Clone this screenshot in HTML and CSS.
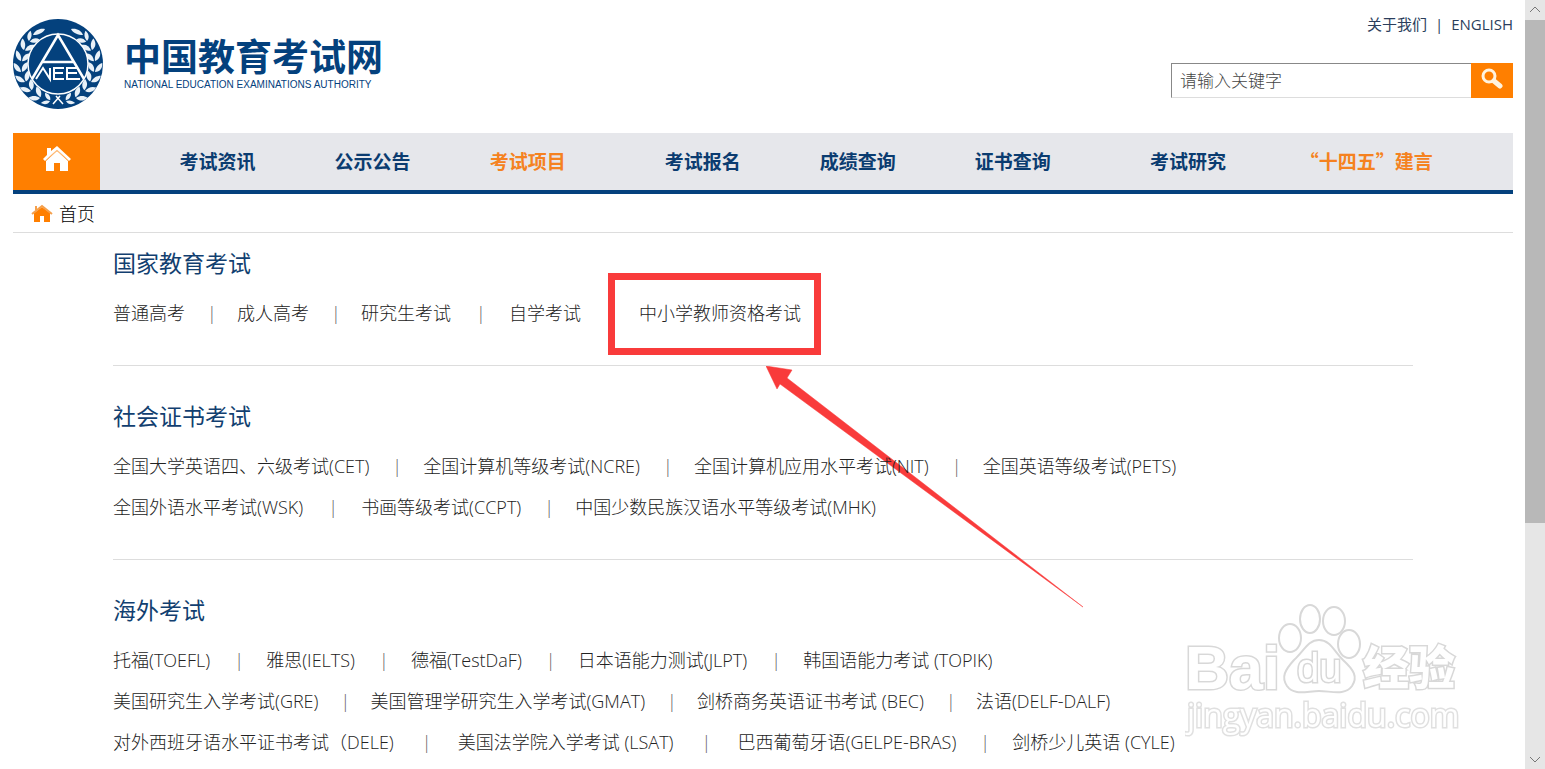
FILE: index.html
```html
<!DOCTYPE html>
<html lang="zh-CN">
  <head>
    <meta charset="UTF-8" />
    <meta name="viewport" content="width=device-width, initial-scale=1.0" />
    <title>中国教育考试网</title>
    <link rel="stylesheet" href="styles.css">
  </head>
  <body>
    <div class="page">
      <header class="header">
        <a class="brand" href="#">
          <svg class="emblem" viewBox="0 0 90 90" aria-hidden="true">
            <defs>
              <g id="leaf">
                <path d="M0 0C-5-1-7-5-6-10C-2-8 0-5 0 0Z" />
                <path d="M1 0C1-5 3-8 8-9C8-4 6-1 1 0Z" />
              </g>
              <g id="laurel">
                <use href="#leaf" transform="translate(37 82) rotate(-72) scale(.8)" />
                <use href="#leaf" transform="translate(27 79) rotate(-58)" />
                <use href="#leaf" transform="translate(18 72) rotate(-42)" />
                <use href="#leaf" transform="translate(12 63) rotate(-26)" />
                <use href="#leaf" transform="translate(8 53) rotate(-8)" />
                <use href="#leaf" transform="translate(8 42) rotate(8)" />
                <use href="#leaf" transform="translate(11 31) rotate(24)" />
                <use href="#leaf" transform="translate(16 22) rotate(40) scale(.9)" />
                <path d="M20 16C22 11 27 9 32 10C30 14 25 16 20 16Z" />
              </g>
            </defs>
            <circle cx="45" cy="45" r="45" fill="#04417d" />
            <g fill="#e9f1f8">
              <use href="#laurel" />
              <use href="#laurel" transform="translate(90 0) scale(-1 1)" />
            </g>
            <circle cx="45" cy="45" r="30" fill="#04417d" stroke="#fff" stroke-width="1.5" />
            <g fill="none" stroke="#fff" stroke-width="2.5">
              <path d="M19 60L45 16L71 60M29 43H61" />
              <path d="M23 60L30 49L37 60V49M51 49H41V60H51M41 54H50M65 49H54V60H67M54 54H64" stroke-width="2" />
              <path d="M40 85L47 77M50 85L43 77" stroke-width="1.5" />
            </g>
          </svg>
          <span class="brand-text">
            <strong>中国教育考试网</strong>
            <small>NATIONAL EDUCATION EXAMINATIONS AUTHORITY</small>
          </span>
        </a>
        <div class="tools">
          <div class="top-links"><a href="#">关于我们</a><span>|</span><a href="#">ENGLISH</a></div>
          <form class="search">
            <input type="text" placeholder="请输入关键字" aria-label="请输入关键字" />
            <button type="button" aria-label="搜索">
              <svg viewBox="0 0 22 22" width="22" height="22" aria-hidden="true">
                <circle cx="8" cy="8" r="6" fill="none" stroke="#fff3df" stroke-width="3" />
                <path d="M13 13L19 18" stroke="#fff3df" stroke-width="5" stroke-linecap="round" />
              </svg>
            </button>
          </form>
        </div>
      </header>

      <nav class="nav">
        <a class="home" href="#" aria-label="首页">
          <svg viewBox="0 0 28 26" width="28" height="26" aria-hidden="true">
            <path d="M0 13L4 9V2H8V5L14 0L28 13L26 15L14 4L2 15Z" fill="#fff" />
            <path d="M3 15L14 5L25 15V25H17V17H11V25H3Z" fill="#fff" />
            <path d="M2 15L14 4L26 15" fill="none" stroke="#ffc68c" stroke-width="1" />
          </svg>
        </a>
        <ul class="menu">
          <li><a href="#">考试资讯</a></li>
          <li><a href="#">公示公告</a></li>
          <li><a class="active" href="#">考试项目</a></li>
          <li class="group"><a href="#">考试报名</a></li>
          <li><a href="#">成绩查询</a></li>
          <li><a href="#">证书查询</a></li>
          <li class="group"><a href="#">考试研究</a></li>
          <li class="last"><a class="active" href="#">“十四五”建言</a></li>
        </ul>
      </nav>

      <div class="crumb">
        <svg viewBox="0 0 22 18" width="22" height="18" aria-hidden="true">
          <path d="M3 9L11 3L19 9V18H13V12H9V18H3Z" fill="#ff7f00" />
          <path d="M1 10L11 2L21 10M5 2V6" fill="none" stroke="#f5a04c" stroke-width="2" />
        </svg>
        <a href="#">首页</a>
      </div>

      <main class="content">
        <section>
          <h2>国家教育考试</h2>
          <ul class="exams tight">
            <li><a href="#">普通高考</a></li>
            <li><span>|</span><a href="#">成人高考</a></li>
            <li><span>|</span><a href="#">研究生考试</a></li>
            <li class="wide"><span>|</span><a href="#">自学考试</a></li>
            <li class="blank">
              <a class="marked" href="#">中小学教师资格考试</a>
              <svg class="arrow" viewBox="0 0 320 242" width="320" height="242" aria-hidden="true">
                <path d="M0 0L26 4L21 12L317 241L14 18L11 23Z" fill="#f93b3b" stroke="#f93b3b" stroke-width=".5" />
              </svg>
            </li>
          </ul>
        </section>

        <section>
          <h2>社会证书考试</h2>
          <ul class="exams">
            <li><a href="#">全国大学英语四、六级考试(CET)</a></li>
            <li><span>|</span><a href="#">全国计算机等级考试(NCRE)</a></li>
            <li><span>|</span><a href="#">全国计算机应用水平考试(NIT)</a></li>
            <li><span>|</span><a href="#">全国英语等级考试(PETS)</a></li>
          </ul>
          <ul class="exams">
            <li><a href="#">全国外语水平考试(WSK)</a></li>
            <li class="wide"><span>|</span><a href="#">书画等级考试(CCPT)</a></li>
            <li><span>|</span><a href="#">中国少数民族汉语水平等级考试(MHK)</a></li>
          </ul>
        </section>

        <section>
          <h2>海外考试</h2>
          <ul class="exams loose">
            <li><a href="#">托福(TOEFL)</a></li>
            <li><span>|</span><a href="#">雅思(IELTS)</a></li>
            <li><span>|</span><a href="#">德福(TestDaF)</a></li>
            <li><span>|</span><a href="#">日本语能力测试(JLPT)</a></li>
            <li><span>|</span><a href="#">韩国语能力考试 (TOPIK)</a></li>
          </ul>
          <ul class="exams tight">
            <li><a href="#">美国研究生入学考试(GRE)</a></li>
            <li><span>|</span><a href="#">美国管理学研究生入学考试(GMAT)</a></li>
            <li><span>|</span><a href="#">剑桥商务英语证书考试 (BEC)</a></li>
            <li><span>|</span><a href="#">法语(DELF-DALF)</a></li>
          </ul>
          <ul class="exams loose">
            <li><a href="#">对外西班牙语水平证书考试（DELE)</a></li>
            <li class="wide"><span>|</span><a href="#">美国法学院入学考试 (LSAT)</a></li>
            <li class="wide"><span>|</span><a href="#">巴西葡萄牙语(GELPE-BRAS)</a></li>
            <li><span>|</span><a href="#">剑桥少儿英语 (CYLE)</a></li>
          </ul>
        </section>
      </main>
    </div>

    <svg class="watermark" viewBox="0 0 290 140" width="290" height="140" aria-hidden="true">
      <g fill="#fff" stroke="#d8d8d8" stroke-width="2">
        <ellipse cx="105" cy="34" rx="11" ry="14" />
        <ellipse cx="125" cy="15" rx="10" ry="14" />
        <ellipse cx="149" cy="17" rx="11" ry="14" />
        <ellipse cx="164" cy="40" rx="11" ry="14" />
        <path d="M134 36C145 36 149 47 158 56C169 66 173 73 167 82C160 92 146 87 134 87C122 87 109 92 102 82C96 73 100 66 109 56C119 47 123 36 134 36Z" />
      </g>
      <g class="watermark-text">
        <text class="latin" x="0" y="85">Bai</text>
        <text class="du" x="112" y="78">du</text>
        <text class="cjk" x="178" y="80">经验</text>
        <text class="domain" x="2" y="123">jingyan.baidu.com</text>
      </g>
    </svg>

    <div class="scrollbar" aria-hidden="true">
      <svg viewBox="0 0 20 20"><path d="M5 12L10 7L15 12" /></svg>
      <div class="track"><div class="thumb"></div></div>
      <svg viewBox="0 0 20 20"><path d="M5 8L10 13L15 8" /></svg>
    </div>
  </body>
</html>
```
FILE: styles.css
```css
* {
  box-sizing: border-box;
}
body {
  margin: 0;
  height: 100vh;
  overflow: hidden;
  background: #fff;
  color: #222;
  font-family: "Open Sans", "Noto Sans CJK SC", sans-serif;
  font-size: 18px;
  font-weight: 300;
}
a {
  color: inherit;
  text-decoration: none;
}
ul {
  margin: 0;
  padding: 0;
  list-style: none;
}
.page {
  margin: 0 32px 0 13px;
}

/* header */
.header {
  display: flex;
  justify-content: space-between;
  height: 133px;
}
.brand {
  display: flex;
  align-items: flex-start;
  gap: 21px;
  padding-top: 19px;
  color: #04417d;
}
.emblem {
  width: 90px;
  height: 90px;
}
.brand-text {
  display: flex;
  flex-direction: column;
  padding-top: 16px;
}
.brand-text strong {
  font-family: "Noto Sans CJK SC", sans-serif;
  font-size: 37px;
  font-weight: bold;
  line-height: 40px;
}
.brand-text small {
  font-family: "Liberation Sans", sans-serif;
  font-size: 10px;
  font-weight: normal;
  line-height: 20px;
}
.tools {
  padding-top: 13px;
}
.top-links {
  display: flex;
  justify-content: flex-end;
  gap: 8px;
  color: #2b3e5c;
  font-size: 15px;
  font-weight: normal;
  line-height: 22px;
}
.search {
  display: flex;
  width: 342px;
  height: 35px;
  margin-top: 28px;
}
.search input {
  flex: 1;
  min-width: 0;
  padding: 0 8px;
  border: 1px solid #ddd;
  border-top-color: #888;
  border-left-color: #888;
  border-right: 0;
  font: inherit;
  font-size: 17px;
  outline: none;
}
.search input::placeholder {
  color: #444;
}
.search button {
  width: 42px;
  padding: 0;
  border: 0;
  background: #ff7f00;
  cursor: pointer;
}

/* navigation */
.nav {
  display: flex;
  height: 61px;
  border-bottom: 4px solid #04417d;
  background: #e6e7eb;
}
.home {
  display: flex;
  justify-content: center;
  width: 87px;
  padding-top: 13px;
  background: #ff7f00;
}
.menu {
  display: flex;
  flex: 1;
  padding: 0 46px 0 40px;
}
.menu li {
  flex: 1;
  color: #0b3c70;
  font-family: "Noto Sans CJK SC", sans-serif;
  font-size: 19px;
  font-weight: bold;
  line-height: 55px;
  text-align: center;
  white-space: nowrap;
}
.menu .group {
  margin-left: 20px;
}
.menu .last {
  flex: 1.3;
}
.menu .active {
  color: #f58220;
}

.crumb {
  display: flex;
  align-items: center;
  gap: 6px;
  height: 39px;
  padding-left: 18px;
  border-bottom: 1px solid #ddd;
  color: #000;
}

/* exam lists */
.content {
  padding: 0 100px;
}
section {
  padding: 20px 0 31px;
  border-bottom: 1px solid #ddd;
}
section:first-child {
  padding-top: 0;
}
section:last-child {
  border-bottom: 0;
}
h2 {
  margin: 0;
  color: #123f70;
  font-size: 23px;
  font-weight: normal;
  line-height: 60px;
}
.exams {
  display: flex;
  line-height: 41px;
  white-space: nowrap;
}
.exams li {
  position: relative;
  display: flex;
}
.exams span {
  width: 8px;
  margin: 0 23px;
  color: #666;
  text-align: center;
}
.tight span {
  margin: 0 22px;
}
.loose span {
  margin: 0 24px;
}
.exams .wide span {
  margin: 0 25px;
}
.loose .wide span {
  margin: 0 28px;
}
.exams .blank {
  margin-left: 58px;
}

/* red frame and arrow */
.marked::after {
  content: "";
  position: absolute;
  inset: -20px -20px -21px -31px;
  border: 7px solid #f93b3b;
}
.arrow {
  position: absolute;
  top: 73px;
  left: 127px;
}

.watermark {
  position: fixed;
  right: 70px;
  bottom: 25px;
}
.watermark-text {
  fill: #fff;
  stroke: #d8d8d8;
  stroke-width: 3px;
  paint-order: stroke;
}
.latin {
  font: bold 61px "Liberation Sans", sans-serif;
}
.du {
  font: 40px "Liberation Sans", sans-serif;
}
.cjk {
  font: 900 46px "Noto Sans CJK SC", sans-serif;
}
.domain {
  font: 32px "Open Sans", sans-serif;
  stroke: #e0e0e0;
}

.scrollbar {
  position: fixed;
  top: 0;
  right: 0;
  bottom: 0;
  display: flex;
  flex-direction: column;
  width: 20px;
  background: #e6e6e6;
}
.scrollbar svg {
  height: 20px;
  fill: none;
  stroke: #777;
}
.track {
  flex: 1;
}
.thumb {
  height: 69%;
  background: #b8b8b8;
}
```
